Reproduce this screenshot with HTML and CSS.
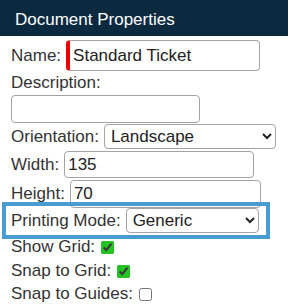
FILE: index.html
```html
<!DOCTYPE html>
<html>
<head>
<meta charset="utf-8">
<link rel="stylesheet" href="styles.css">
</head>
<body>
<div class="panel">
  <div class="panel-header">Document Properties</div>
  <div class="panel-body">
    <div class="row row-name">
      <label class="label">Name:</label>
      <input class="field field-required" type="text" value="Standard Ticket">
    </div>
    <div class="stack">
      <label class="label label-line">Description:</label>
      <input class="field field-desc" type="text" value="">
    </div>
    <div class="row row-orient">
      <label class="label">Orientation:</label>
      <select class="select select-wide"><option>Landscape</option><option>Portrait</option></select>
    </div>
    <div class="row row-width">
      <label class="label">Width:</label>
      <input class="field field-size" type="text" value="135">
    </div>
    <div class="row row-height">
      <label class="label">Height:</label>
      <input class="field field-height" type="text" value="70">
    </div>
    <div class="row row-highlight">
      <label class="label">Printing Mode:</label>
      <select class="select select-narrow"><option>Generic</option><option>Thermal</option></select>
    </div>
    <div class="checks">
      <label class="check-row">Show Grid: <input class="check" type="checkbox" checked></label>
      <label class="check-row">Snap to Grid: <input class="check" type="checkbox" checked></label>
      <label class="check-row">Snap to Guides: <input class="check" type="checkbox"></label>
    </div>
  </div>
</div>
</body>
</html>
```
FILE: styles.css
```css
html, body {
  margin: 0;
  padding: 0;
  background: #ffffff;
}

body {
  font-family: "Liberation Sans", Arial, sans-serif;
  font-size: 17px;
  color: #333333;
  overflow: hidden;
}

.panel {
  width: 288px;
}

.panel-header {
  background: #0b2a3f;
  color: #ffffff;
  height: 32px;
  padding: 4px 0 0 15px;
  line-height: 32px;
  font-size: 17px;
}

.panel-body {
  padding: 4px 0 0 11px;
}

.row {
  display: flex;
  align-items: center;
  gap: 5px;
  white-space: nowrap;
}

.label {
  color: #333333;
}

.field {
  box-sizing: border-box;
  width: 190px;
  height: 28px;
  border: 1px solid #a3a3a3;
  border-radius: 4px;
  padding: 0 3px;
  font-family: inherit;
  font-size: 17px;
  color: #222222;
  background: #ffffff;
  outline: none;
  margin: 0;
}

.field-required {
  width: 194px;
  height: 31px;
  border-left: 4px solid #ee0000;
}

.stack {
  display: flex;
  flex-direction: column;
  align-items: flex-start;
}

.label-line {
  line-height: 24px;
}

.field-desc {
  width: 189px;
}

.row-orient {
  margin-top: 1px;
}

.select {
  box-sizing: border-box;
  height: 25px;
  border: 1px solid #a3a3a3;
  border-radius: 4px;
  padding: 0 2px;
  font-family: inherit;
  font-size: 17px;
  color: #222222;
  background: #ffffff;
  margin: 0;
}

.select-wide {
  width: 172px;
}

.select-narrow {
  width: 133px;
}

.row-width {
  margin-top: 2px;
}

.field-size {
  height: 27px;
}

.row-height {
  margin-top: 2px;
}

.field-height {
  width: 191px;
}

.row-highlight {
  box-sizing: border-box;
  width: 256px;
  margin-left: -3px;
  padding-left: 3px;
  outline: 4px solid #4a9bd2;
  outline-offset: 2px;
}

.checks {
  margin-top: 2px;
  display: flex;
  flex-direction: column;
}

.check-row {
  line-height: 23.5px;
  white-space: nowrap;
}

.check {
  width: 13px;
  height: 13px;
  margin: 0 0 0 1px;
  vertical-align: middle;
  accent-color: #22c322;
}
```
